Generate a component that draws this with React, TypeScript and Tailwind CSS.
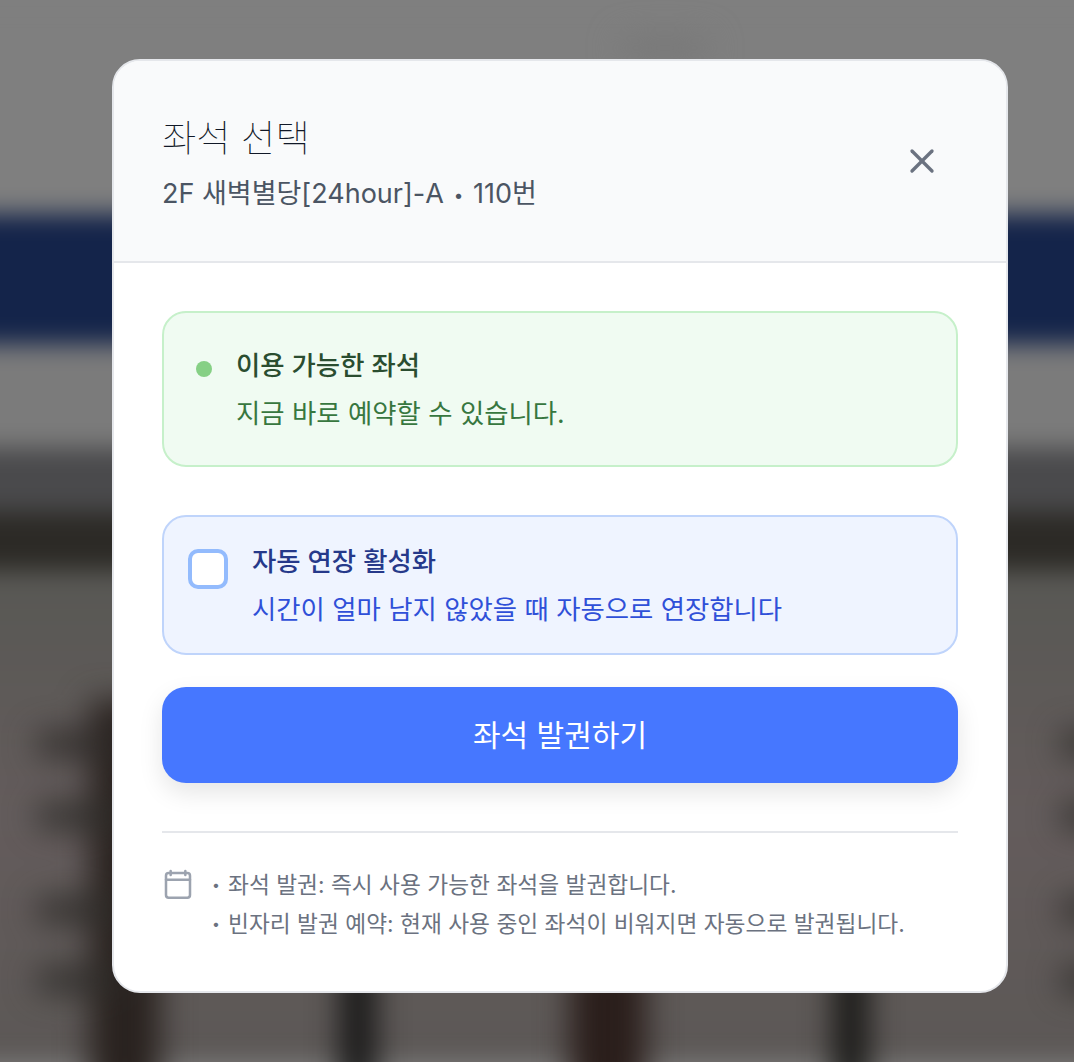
import { X } from 'lucide-react';

const font = { fontFamily: '"Inter", "Noto Sans CJK KR", sans-serif' };

function Backdrop() {
  return (
    <div className="absolute inset-0 overflow-hidden bg-[#7f7f7f]">
      <div className="absolute -inset-x-[40px] inset-y-0 flex flex-col blur-[12px]">
        <div className="h-[214px] shrink-0 bg-[#7f7f7f]" />
        <div className="h-[130px] shrink-0 bg-[#14244a]" />
        <div className="h-[104px] shrink-0 bg-[#7b7b7b]" />
        <div className="h-[64px] shrink-0 bg-[#4a4a4c]" />
        <div className="h-[58px] shrink-0 bg-[#2c2a26]" />
        <div className="flex-1 bg-gradient-to-b from-[#585854] via-[#645c5c] to-[#5c5856]" />
      </div>
      <div className="absolute inset-0 blur-[16px]">
        <div className="absolute left-[620px] top-[38px] h-[20px] w-[90px] rounded-full bg-[#777777]" />
        <div className="absolute left-[90px] top-[700px] h-[400px] w-[70px] bg-[#29221f]" />
        <div className="absolute left-[36px] top-[732px] h-[24px] w-[90px] rounded-full bg-[#2f2b29]" />
        <div className="absolute left-[36px] top-[804px] h-[24px] w-[90px] rounded-full bg-[#2f2d2a]" />
        <div className="absolute left-[36px] top-[898px] h-[24px] w-[90px] rounded-full bg-[#2f2d2a]" />
        <div className="absolute left-[36px] top-[968px] h-[24px] w-[90px] rounded-full bg-[#2f2d2a]" />
        <div className="absolute left-[1060px] top-[732px] h-[24px] w-[60px] rounded-full bg-[#2f2d2a]" />
        <div className="absolute left-[1060px] top-[804px] h-[24px] w-[60px] rounded-full bg-[#2f2d2a]" />
        <div className="absolute left-[1060px] top-[898px] h-[24px] w-[60px] rounded-full bg-[#2f2d2a]" />
        <div className="absolute left-[1060px] top-[968px] h-[24px] w-[60px] rounded-full bg-[#2f2d2a]" />
        <div className="absolute left-[342px] top-[960px] h-[140px] w-[32px] bg-[#101010]" />
        <div className="absolute left-[570px] top-[960px] h-[140px] w-[76px] bg-[#2a1e1b]" />
        <div className="absolute left-[835px] top-[960px] h-[140px] w-[32px] bg-[#121210]" />
      </div>
    </div>
  );
}

function CalendarIcon() {
  return (
    <svg className="mt-[4px] h-[32px] w-[32px] shrink-0 text-[#9ca3af]" viewBox="0 0 24 24" fill="none" stroke="currentColor" strokeWidth="1.9" strokeLinecap="round" strokeLinejoin="round">
      <path d="M6.5 1.5v3M17.5 1.5v3M3 8h18" />
      <rect x="3" y="3" width="18" height="18.5" rx="2" />
    </svg>
  );
}

function Note({ children }: { children: string }) {
  return (
    <li className="flex items-center">
      <span className="w-[16px] text-[14px] leading-none">•</span>
      {children}
    </li>
  );
}

export default function App() {
  return (
    <div className="relative flex h-[1062px] w-full overflow-hidden" style={font}>
      <Backdrop />
      <div className="relative ml-[112px] mt-[59px] h-fit w-[896px] overflow-hidden rounded-[28px] border-2 border-[#e5e7eb] bg-white">
        <div className="flex h-[202px] items-center justify-between border-b-2 border-[#e5e7eb] bg-[#f9fafb] px-12">
          <div className="pt-[7px]">
            <h2 className="text-[37.3px] font-thin leading-[48px] text-[#111827]">좌석 선택</h2>
            <p className="mt-[13px] text-[27px] leading-[36px] text-[#4b5563]">
              2F 새벽별당[24hour]-A <span className="relative -top-[2px] inline-block w-[14px] text-center text-[17px]">•</span> 110번
            </p>
          </div>
          <X className="mr-[16px] h-[40px] w-[40px] text-[#6b7280]" strokeWidth={2} />
        </div>
        <div className="px-12 pb-[48px] pt-[48px]">
          <div className="flex h-[156px] items-start gap-6 rounded-3xl border-2 border-[#c6f0ca] bg-[#f0fbf2] px-8 pt-[32px]">
            <span className="mt-[16px] h-[16px] w-[16px] shrink-0 rounded-full bg-[#86d085]" />
            <div>
              <p className="text-[26.4px] font-medium leading-[40px] text-[#2a4d30]">이용 가능한 좌석</p>
              <p className="mt-[8px] text-[26.4px] leading-[40px] text-[#37773f]">지금 바로 예약할 수 있습니다.</p>
            </div>
          </div>
          <div className="mt-[48px] flex h-[140px] items-start gap-6 rounded-3xl border-2 border-[#bfd4fb] bg-[#eff4ff] px-6 pt-[24px]">
            <span className="mt-[8px] h-[40px] w-[40px] shrink-0 rounded-[10px] border-4 border-[#93bbfd] bg-white" />
            <div>
              <p className="text-[26.4px] font-medium leading-[40px] text-[#26398a]">자동 연장 활성화</p>
              <p className="mt-[8px] text-[26.4px] leading-[40px] text-[#2f50d8]">시간이 얼마 남지 않았을 때 자동으로 연장합니다</p>
            </div>
          </div>
          <button className="mt-[32px] flex h-[96px] w-full items-center justify-center rounded-3xl bg-[#4677ff] text-[30px] font-normal text-white shadow-[0_10px_24px_rgba(0,0,0,0.1)]">
            좌석 발권하기
          </button>
          <div className="mt-[48px] h-[2px] bg-[#e5e7eb]" />
          <div className="mt-[32px] flex items-start gap-[18px]">
            <CalendarIcon />
            <ul className="text-[22.72px] leading-[39px] text-[#6b7280]">
              <Note>좌석 발권: 즉시 사용 가능한 좌석을 발권합니다.</Note>
              <Note>빈자리 발권 예약: 현재 사용 중인 좌석이 비워지면 자동으로 발권됩니다.</Note>
            </ul>
          </div>
        </div>
      </div>
    </div>
  );
}
